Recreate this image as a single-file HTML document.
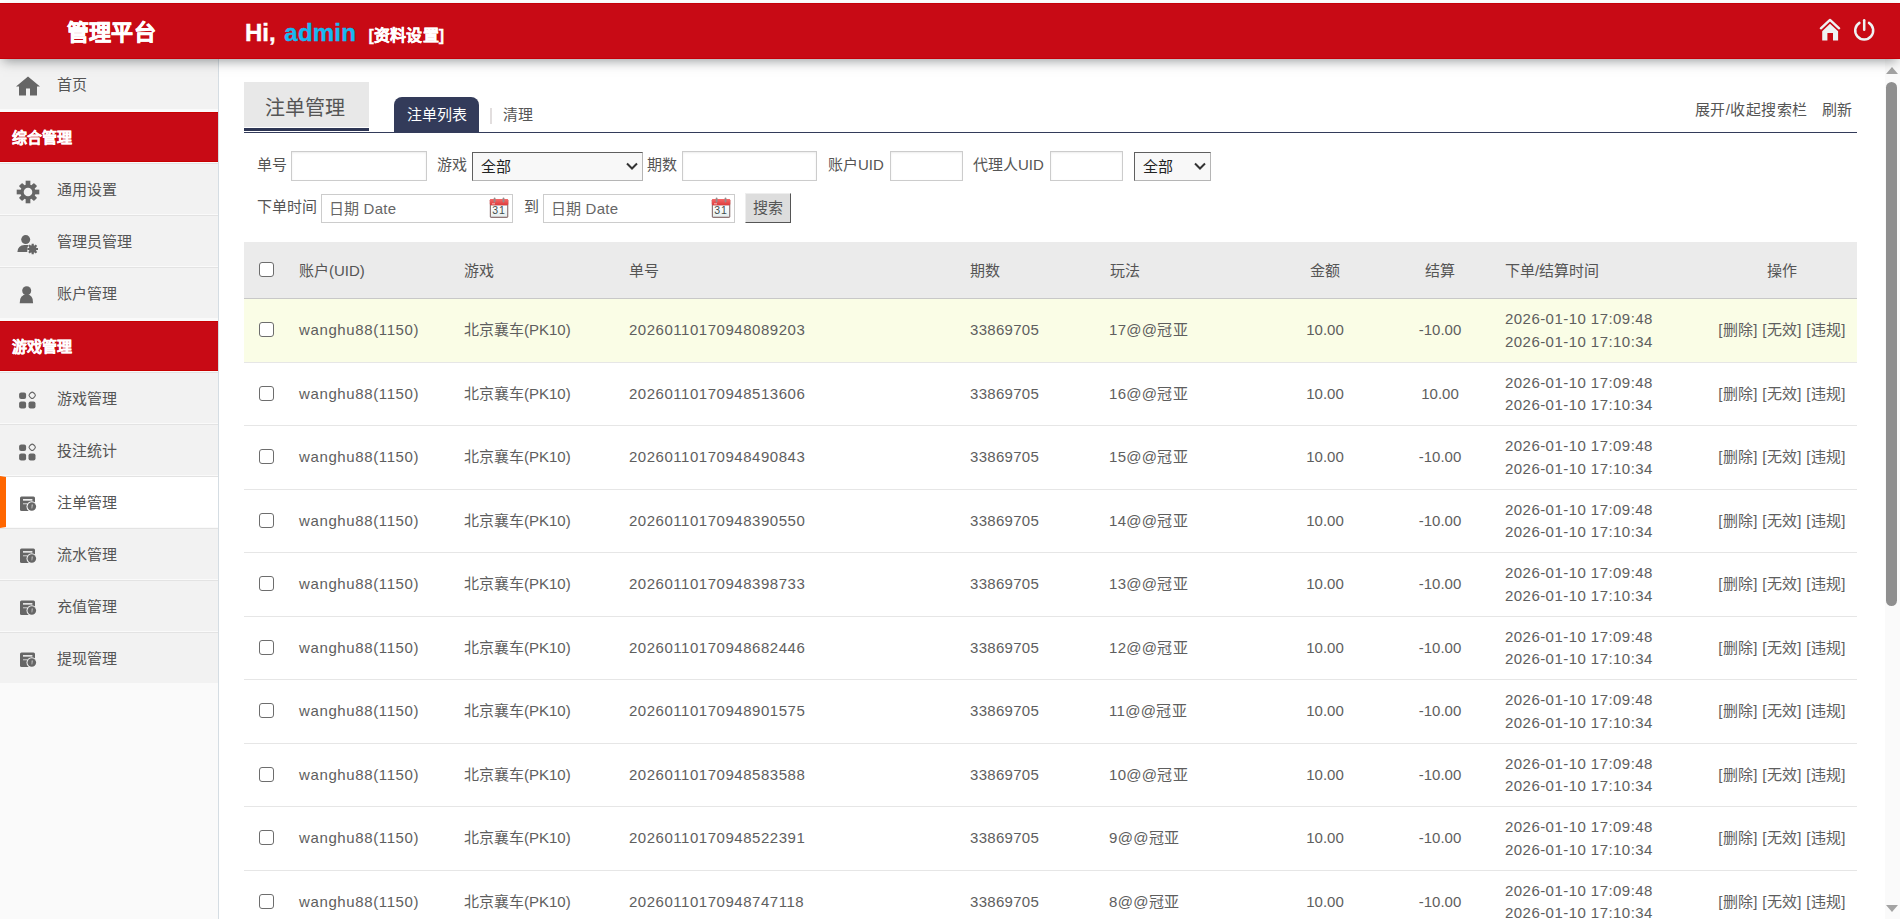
<!DOCTYPE html>
<html lang="zh-CN">
<head>
<meta charset="utf-8">
<style>
*{box-sizing:border-box;margin:0;padding:0}
html,body{width:1900px;height:919px;overflow:hidden;background:#fff;font-family:"Liberation Sans",sans-serif;color:#555}
#hdr{position:absolute;left:0;top:3px;width:1900px;height:56px;background:#c80a15;box-shadow:0 5px 11px -3px rgba(50,55,60,.5);border-top:1px solid #c40008;border-bottom:1px solid #c40008;z-index:5}
#hdr .logo{position:absolute;left:66.5px;top:13.5px;font-size:22px;font-weight:bold;color:#fff;line-height:30px;letter-spacing:0.35px;-webkit-text-stroke:0.6px #fff;white-space:nowrap}
#hdr .hi{position:absolute;left:245px;top:12.5px;font-size:24px;font-weight:bold;color:#fff;line-height:32px;white-space:nowrap;-webkit-text-stroke-width:0.4px}
#hdr .hi .adm{color:#17b8f0;margin-left:2px;letter-spacing:0.2px}
#hdr .hi .set{font-size:16px;margin-left:12.5px;letter-spacing:0.2px;-webkit-text-stroke:0.3px #fff}
#hdr svg{position:absolute}
#side{position:absolute;left:0;top:59px;width:219px;height:860px;background:#fafafa;border-right:1px solid #d5dde3}
.it{position:absolute;left:0;width:218px;height:52px;background:#f2f2f2;border-top:1px solid #e3e3e3;border-bottom:1px solid #fafafa;font-size:15px;color:#555;line-height:51.5px;padding-left:57px;white-space:nowrap}
.it svg{position:absolute}
.sec{position:absolute;left:0;width:218px;height:50px;background:#c80a15;border-top:1px solid #c80000;border-bottom:1px solid #c80000;color:#fff;font-size:15px;font-weight:bold;line-height:50px;padding-left:12px;-webkit-text-stroke:0.3px #fff}
.it.act{background:#fff;border-left:6px solid #ff6600;padding-left:51px}
.it.act svg{margin-left:-6px}
#sb{position:absolute;left:1885px;top:59px;width:15px;height:860px;background:#fafafa}
#sb .th{position:absolute;left:1px;top:23px;width:11px;height:524px;border-radius:6px;background:#8f8f8f}
#sb .up{position:absolute;left:1px;top:8px;width:0;height:0;border-left:6.5px solid transparent;border-right:6.5px solid transparent;border-bottom:7px solid #a3a3a3}
#sb .dn{position:absolute;left:1px;top:846px;width:0;height:0;border-left:6.5px solid transparent;border-right:6.5px solid transparent;border-top:7px solid #a3a3a3}
.p{position:absolute;white-space:nowrap}
.ttl{position:absolute;left:244px;top:82px;width:125px;height:45px;background:#e8e8e8;font-size:20px;color:#555;text-align:center;line-height:53px;padding-right:3px}
.ttlb{position:absolute;left:244px;top:128px;width:125px;height:3px;background:#2e3654}
.tline{position:absolute;left:244px;top:132px;width:1613px;height:1px;background:#333b5a}
.tab{position:absolute;left:394px;top:97px;width:85px;height:36px;background:#333b5a;border-radius:8px 8px 0 0;color:#fff;font-size:15px;text-align:center;line-height:36px}
.lbl{position:absolute;font-size:15px;color:#555;white-space:nowrap;line-height:20px}
.inp{position:absolute;border:1px solid #ccc;background:#fff;box-shadow:inset 0 1px 2px rgba(0,0,0,.08)}
.sel{position:absolute;border:1px solid;border-color:#5f5f5f #b5b5b5 #b5b5b5 #5f5f5f;background:#f8f8f8;font-size:15px;color:#222;line-height:27px;padding-left:8px}
.sel svg{position:absolute}
.ph{position:absolute;left:6.5px;top:4px;letter-spacing:0.3px;font-size:15px;color:#666;line-height:20px;white-space:nowrap}
.btn{position:absolute;left:745px;top:193px;width:46px;height:30px;background:#ddd;border:1px solid;border-color:#eee #555 #555 #eee;font-size:15px;color:#555;text-align:center;line-height:28px}
.thd{position:absolute;left:244px;top:242px;width:1613px;height:57px;background:#ebebeb;border-bottom:1px solid #c8c8c8}
.tr{position:absolute;left:0;width:1900px;height:63.5px}
.tr::after{content:"";position:absolute;left:244px;right:43px;bottom:0;height:1px;background:#e6e6e6}
.tr.hov::before{content:"";position:absolute;left:244px;right:43px;top:0;bottom:0;background:#fafde6}
.c{position:absolute;top:20px;font-size:15px;line-height:22px;white-space:nowrap;color:#5e5e5e}
.cc{width:100px;text-align:center}
.op{width:160px;letter-spacing:0.3px}
.t2{position:absolute;top:9px;color:#5e5e5e;font-size:15px;line-height:22.5px;white-space:nowrap;letter-spacing:0.45px}
.cb{position:absolute;left:259px;top:23px;width:15px;height:15px;border:1px solid #6d6d6d;border-radius:3px;background:#fff}
.h{position:absolute;top:19px;font-size:15px;line-height:20px;white-space:nowrap}
</style>
</head>
<body>
<div id="hdr">
  <div class="logo">管理平台</div>
  <div class="hi">Hi, <span class="adm">admin</span><span class="set">[资料设置]</span></div>
  <svg width="70" height="40" viewBox="1815 11 70 40" style="left:1815px;top:7px"><path d="M1820.9 28.3 L1830 19.9 L1839.1 28.3" fill="none" stroke="#eef2f3" stroke-width="2.4" stroke-linecap="round" stroke-linejoin="round"/><path d="M1822.2 31.2 L1830 23.8 L1838.1 31.2 L1838.1 40.5 L1833 40.5 L1833 33 L1827.4 33 L1827.4 40.5 L1822.2 40.5 Z" fill="#eef2f3"/><path d="M1859.43 22.9 A9 9 0 1 0 1868.97 22.9" fill="none" stroke="#eef2f3" stroke-width="2.5" stroke-linecap="round"/><path d="M1864.2 20.2 L1864.2 29.8" stroke="#eef2f3" stroke-width="2.5" stroke-linecap="round"/></svg>
</div>
<div id="side">
</div>
<div style="position:absolute;left:0;top:0">
<div class="it" style="top:58px"><svg width="26" height="22" viewBox="0 0 26 22" style="left:15px;top:17px"><path d="M1 10.5 L13 0.5 L25 10.5 L22 10.5 L22 19.5 L15 19.5 L15 12.5 L11 12.5 L11 19.5 L4 19.5 L4 10.5 Z" fill="#666"/></svg><span>首页</span></div>
<div class="sec" style="top:112px">综合管理</div>
<div class="it" style="top:163px"><svg width="26" height="26" viewBox="-13 -13 26 26" style="left:14.5px;top:14.5px"><g fill="#666"><rect x="-2.35" y="-11.3" width="4.7" height="5" transform="rotate(0)"/><rect x="-2.35" y="-11.3" width="4.7" height="5" transform="rotate(90)"/><rect x="-2.35" y="-11.3" width="4.7" height="5" transform="rotate(180)"/><rect x="-2.35" y="-11.3" width="4.7" height="5" transform="rotate(270)"/><rect x="-2.3" y="-10.6" width="4.6" height="5" rx="0.8" transform="rotate(45)"/><rect x="-2.3" y="-10.6" width="4.6" height="5" rx="0.8" transform="rotate(135)"/><rect x="-2.3" y="-10.6" width="4.6" height="5" rx="0.8" transform="rotate(225)"/><rect x="-2.3" y="-10.6" width="4.6" height="5" rx="0.8" transform="rotate(315)"/><circle r="7.6"/><circle r="4.3" fill="#f2f2f2"/></g></svg><span>通用设置</span></div>
<div class="it" style="top:215px"><svg width="24" height="22" viewBox="0 0 24 22" style="left:16px;top:19px"><g fill="#666"><circle cx="9.7" cy="4.6" r="4.5"/><path d="M1.4 16.9 Q1.8 10.4 8.5 10 L12.6 10 Q10.6 12.5 11.3 16.9 Z"/><g transform="translate(16.7,14)"><circle r="3.7"/><path d="M-1.1 -5.3 H1.1 V5.3 H-1.1Z M-5.3 -1.1 H5.3 V1.1 H-5.3Z" /><path d="M-1.1 -5.3 H1.1 V5.3 H-1.1Z M-5.3 -1.1 H5.3 V1.1 H-5.3Z" transform="rotate(45)"/></g></g></svg><span>管理员管理</span></div>
<div class="it" style="top:267px"><svg width="18" height="20" viewBox="0 0 18 20" style="left:18px;top:17px"><g fill="#666"><circle cx="8.7" cy="5.7" r="4.5"/><path d="M1.7 18.2 Q1.5 9.6 8.7 9.6 Q15.3 9.6 15.1 18.2 Z"/></g></svg><span>账户管理</span></div>
<div class="sec" style="top:321px">游戏管理</div>
<div class="it" style="top:372px"><svg width="22" height="22" viewBox="0 0 22 22" style="left:17px;top:17px"><g fill="#666"><rect x="2.1" y="2.4" width="7" height="6.6" rx="2"/><rect x="2.1" y="11.5" width="7" height="7" rx="2"/><rect x="11.5" y="11.5" width="7" height="7" rx="2"/><rect x="-2.75" y="-2.75" width="5.5" height="5.5" rx="1.9" transform="translate(15.2,5.3) rotate(45)" fill="none" stroke="#666" stroke-width="1.1"/></g></svg><span>游戏管理</span></div>
<div class="it" style="top:424px"><svg width="22" height="22" viewBox="0 0 22 22" style="left:17px;top:17px"><g fill="#666"><rect x="2.1" y="2.4" width="7" height="6.6" rx="2"/><rect x="2.1" y="11.5" width="7" height="7" rx="2"/><rect x="11.5" y="11.5" width="7" height="7" rx="2"/><rect x="-2.75" y="-2.75" width="5.5" height="5.5" rx="1.9" transform="translate(15.2,5.3) rotate(45)" fill="none" stroke="#666" stroke-width="1.1"/></g></svg><span>投注统计</span></div>
<div class="it act" style="top:476px"><svg width="22" height="22" viewBox="0 0 22 22" style="left:17px;top:16px"><rect x="3" y="3.6" width="15" height="14.4" rx="1.5" fill="#666"/><rect x="6" y="6" width="9.4" height="1.7" fill="#fff" opacity=".9"/><rect x="6" y="10" width="4.5" height="1.4" fill="#fff" opacity=".55"/><circle cx="14.8" cy="13.5" r="5.3" fill="#fff"/><circle cx="14.8" cy="13.5" r="4.3" fill="#666"/><path d="M14.6 11.4 L16 11.4 L15.2 15.6 L14.5 15.6Z" fill="#fff" opacity=".6"/></svg><span>注单管理</span></div>
<div class="it" style="top:528px"><svg width="22" height="22" viewBox="0 0 22 22" style="left:17px;top:16px"><rect x="3" y="3.6" width="15" height="14.4" rx="1.5" fill="#666"/><rect x="6" y="6" width="9.4" height="1.7" fill="#f2f2f2" opacity=".9"/><rect x="6" y="10" width="4.5" height="1.4" fill="#f2f2f2" opacity=".55"/><circle cx="14.8" cy="13.5" r="5.3" fill="#f2f2f2"/><circle cx="14.8" cy="13.5" r="4.3" fill="#666"/><path d="M14.6 11.4 L16 11.4 L15.2 15.6 L14.5 15.6Z" fill="#f2f2f2" opacity=".6"/></svg><span>流水管理</span></div>
<div class="it" style="top:580px"><svg width="22" height="22" viewBox="0 0 22 22" style="left:17px;top:16px"><rect x="3" y="3.6" width="15" height="14.4" rx="1.5" fill="#666"/><rect x="6" y="6" width="9.4" height="1.7" fill="#f2f2f2" opacity=".9"/><rect x="6" y="10" width="4.5" height="1.4" fill="#f2f2f2" opacity=".55"/><circle cx="14.8" cy="13.5" r="5.3" fill="#f2f2f2"/><circle cx="14.8" cy="13.5" r="4.3" fill="#666"/><path d="M14.6 11.4 L16 11.4 L15.2 15.6 L14.5 15.6Z" fill="#f2f2f2" opacity=".6"/></svg><span>充值管理</span></div>
<div class="it" style="top:632px"><svg width="22" height="22" viewBox="0 0 22 22" style="left:17px;top:16px"><rect x="3" y="3.6" width="15" height="14.4" rx="1.5" fill="#666"/><rect x="6" y="6" width="9.4" height="1.7" fill="#f2f2f2" opacity=".9"/><rect x="6" y="10" width="4.5" height="1.4" fill="#f2f2f2" opacity=".55"/><circle cx="14.8" cy="13.5" r="5.3" fill="#f2f2f2"/><circle cx="14.8" cy="13.5" r="4.3" fill="#666"/><path d="M14.6 11.4 L16 11.4 L15.2 15.6 L14.5 15.6Z" fill="#f2f2f2" opacity=".6"/></svg><span>提现管理</span></div>
</div>
<div id="sb"><div class="up"></div><div class="th"></div><div class="dn"></div></div>

<div class="ttl">注单管理</div>
<div class="ttlb"></div>
<div class="tline"></div>
<div class="tab">注单列表</div>
<div class="p" style="left:490px;top:108px;width:1.5px;height:16px;background:#e2dede"></div>
<div class="lbl" style="left:503px;top:104.5px">清理</div>
<div class="lbl" style="left:1695px;top:99.5px;letter-spacing:0.4px">展开/收起搜索栏</div>
<div class="lbl" style="left:1822px;top:99.5px">刷新</div>

<div class="lbl" style="left:257px;top:155px">单号</div>
<div class="inp" style="left:291px;top:151px;width:136px;height:30px"></div>
<div class="lbl" style="left:437px;top:155px">游戏</div>
<div class="sel" style="left:472px;top:152px;width:171px;height:29px">全部<svg width="12" height="8" viewBox="0 0 12 8" style="left:153px;top:9.3px"><path d="M1 1.5 L6 6.5 L11 1.5" fill="none" stroke="#333" stroke-width="2"/></svg></div>
<div class="lbl" style="left:647px;top:155px">期数</div>
<div class="inp" style="left:682px;top:151px;width:135px;height:30px"></div>
<div class="lbl" style="left:828px;top:155px">账户UID</div>
<div class="inp" style="left:890px;top:151px;width:73px;height:30px"></div>
<div class="lbl" style="left:973px;top:155px">代理人UID</div>
<div class="inp" style="left:1050px;top:151px;width:73px;height:30px"></div>
<div class="sel" style="left:1134px;top:152px;width:77px;height:29px">全部<svg width="12" height="8" viewBox="0 0 12 8" style="left:59px;top:9.3px"><path d="M1 1.5 L6 6.5 L11 1.5" fill="none" stroke="#333" stroke-width="2"/></svg></div>

<div class="lbl" style="left:257px;top:197px">下单时间</div>
<div class="inp" style="left:321px;top:194px;width:192px;height:29px;box-shadow:none"><span class="ph">日期 Date</span>
<svg width="21" height="23" viewBox="0 0 21 23" style="position:absolute;left:167px;top:1px"><defs><linearGradient id="cr" x1="0" y1="0" x2="0" y2="1"><stop offset="0" stop-color="#f56a6a"/><stop offset="1" stop-color="#dc3b3b"/></linearGradient><linearGradient id="cb" x1="0" y1="0" x2="0" y2="1"><stop offset="0" stop-color="#ffffff"/><stop offset="1" stop-color="#e6eeee"/></linearGradient></defs><rect x="0.8" y="2.9" width="18.5" height="19" rx="1.6" fill="#8e7676"/><rect x="2" y="9.3" width="16.1" height="11.4" fill="url(#cb)"/><rect x="0.8" y="2.9" width="18.5" height="6.4" rx="1.4" fill="url(#cr)"/><rect x="3" y="7.4" width="3" height="0.9" fill="#fff" opacity=".7"/><rect x="4.7" y="1.5" width="1.8" height="5" rx="0.9" fill="#9a8a8a"/><rect x="13.6" y="1.5" width="1.8" height="5" rx="0.9" fill="#9a8a8a"/><text x="10" y="18.2" font-size="10.5" text-anchor="middle" fill="#3f4d4b" font-family="Liberation Sans" letter-spacing="0.8">31</text></svg></div>
<div class="lbl" style="left:524px;top:197px">到</div>
<div class="inp" style="left:543px;top:194px;width:192px;height:29px;box-shadow:none"><span class="ph">日期 Date</span>
<svg width="21" height="23" viewBox="0 0 21 23" style="position:absolute;left:167px;top:1px"><defs><linearGradient id="cr2" x1="0" y1="0" x2="0" y2="1"><stop offset="0" stop-color="#f56a6a"/><stop offset="1" stop-color="#dc3b3b"/></linearGradient><linearGradient id="cb2" x1="0" y1="0" x2="0" y2="1"><stop offset="0" stop-color="#ffffff"/><stop offset="1" stop-color="#e6eeee"/></linearGradient></defs><rect x="0.8" y="2.9" width="18.5" height="19" rx="1.6" fill="#8e7676"/><rect x="2" y="9.3" width="16.1" height="11.4" fill="url(#cb2)"/><rect x="0.8" y="2.9" width="18.5" height="6.4" rx="1.4" fill="url(#cr2)"/><rect x="3" y="7.4" width="3" height="0.9" fill="#fff" opacity=".7"/><rect x="4.7" y="1.5" width="1.8" height="5" rx="0.9" fill="#9a8a8a"/><rect x="13.6" y="1.5" width="1.8" height="5" rx="0.9" fill="#9a8a8a"/><text x="10" y="18.2" font-size="10.5" text-anchor="middle" fill="#3f4d4b" font-family="Liberation Sans" letter-spacing="0.8">31</text></svg></div>
<div class="btn">搜索</div>

<div class="thd"></div>
<div style="position:absolute;left:0;top:242px;width:1900px;height:57px">
<i class="cb" style="top:20px"></i>
<span class="h" style="left:299px">账户(UID)</span>
<span class="h" style="left:464px">游戏</span>
<span class="h" style="left:629px">单号</span>
<span class="h" style="left:970px">期数</span>
<span class="h" style="left:1110px">玩法</span>
<span class="h" style="left:1275px;width:100px;text-align:center">金额</span>
<span class="h" style="left:1390px;width:100px;text-align:center">结算</span>
<span class="h" style="left:1505px">下单/结算时间</span>
<span class="h" style="left:1732px;width:100px;text-align:center">操作</span>
</div>
<div class="tr hov" style="top:299.0px"><i class="cb"></i><span class="c" style="left:299px;letter-spacing:0.62px">wanghu88(1150)</span><span class="c" style="left:464px">北京襄车(PK10)</span><span class="c" style="left:629px;letter-spacing:0.53px">20260110170948089203</span><span class="c" style="left:970px;letter-spacing:0.3px">33869705</span><span class="c" style="left:1109px;letter-spacing:0.3px">17@@冠亚</span><span class="c cc" style="left:1275px">10.00</span><span class="c cc" style="left:1390px">-10.00</span><span class="t2" style="left:1505px">2026-01-10 17:09:48<br>2026-01-10 17:10:34</span><span class="c cc op" style="left:1702px">[删除] [无效] [违规]</span></div>
<div class="tr" style="top:362.5px"><i class="cb"></i><span class="c" style="left:299px;letter-spacing:0.62px">wanghu88(1150)</span><span class="c" style="left:464px">北京襄车(PK10)</span><span class="c" style="left:629px;letter-spacing:0.53px">20260110170948513606</span><span class="c" style="left:970px;letter-spacing:0.3px">33869705</span><span class="c" style="left:1109px;letter-spacing:0.3px">16@@冠亚</span><span class="c cc" style="left:1275px">10.00</span><span class="c cc" style="left:1390px">10.00</span><span class="t2" style="left:1505px">2026-01-10 17:09:48<br>2026-01-10 17:10:34</span><span class="c cc op" style="left:1702px">[删除] [无效] [违规]</span></div>
<div class="tr" style="top:426.0px"><i class="cb"></i><span class="c" style="left:299px;letter-spacing:0.62px">wanghu88(1150)</span><span class="c" style="left:464px">北京襄车(PK10)</span><span class="c" style="left:629px;letter-spacing:0.53px">20260110170948490843</span><span class="c" style="left:970px;letter-spacing:0.3px">33869705</span><span class="c" style="left:1109px;letter-spacing:0.3px">15@@冠亚</span><span class="c cc" style="left:1275px">10.00</span><span class="c cc" style="left:1390px">-10.00</span><span class="t2" style="left:1505px">2026-01-10 17:09:48<br>2026-01-10 17:10:34</span><span class="c cc op" style="left:1702px">[删除] [无效] [违规]</span></div>
<div class="tr" style="top:489.5px"><i class="cb"></i><span class="c" style="left:299px;letter-spacing:0.62px">wanghu88(1150)</span><span class="c" style="left:464px">北京襄车(PK10)</span><span class="c" style="left:629px;letter-spacing:0.53px">20260110170948390550</span><span class="c" style="left:970px;letter-spacing:0.3px">33869705</span><span class="c" style="left:1109px;letter-spacing:0.3px">14@@冠亚</span><span class="c cc" style="left:1275px">10.00</span><span class="c cc" style="left:1390px">-10.00</span><span class="t2" style="left:1505px">2026-01-10 17:09:48<br>2026-01-10 17:10:34</span><span class="c cc op" style="left:1702px">[删除] [无效] [违规]</span></div>
<div class="tr" style="top:553.0px"><i class="cb"></i><span class="c" style="left:299px;letter-spacing:0.62px">wanghu88(1150)</span><span class="c" style="left:464px">北京襄车(PK10)</span><span class="c" style="left:629px;letter-spacing:0.53px">20260110170948398733</span><span class="c" style="left:970px;letter-spacing:0.3px">33869705</span><span class="c" style="left:1109px;letter-spacing:0.3px">13@@冠亚</span><span class="c cc" style="left:1275px">10.00</span><span class="c cc" style="left:1390px">-10.00</span><span class="t2" style="left:1505px">2026-01-10 17:09:48<br>2026-01-10 17:10:34</span><span class="c cc op" style="left:1702px">[删除] [无效] [违规]</span></div>
<div class="tr" style="top:616.5px"><i class="cb"></i><span class="c" style="left:299px;letter-spacing:0.62px">wanghu88(1150)</span><span class="c" style="left:464px">北京襄车(PK10)</span><span class="c" style="left:629px;letter-spacing:0.53px">20260110170948682446</span><span class="c" style="left:970px;letter-spacing:0.3px">33869705</span><span class="c" style="left:1109px;letter-spacing:0.3px">12@@冠亚</span><span class="c cc" style="left:1275px">10.00</span><span class="c cc" style="left:1390px">-10.00</span><span class="t2" style="left:1505px">2026-01-10 17:09:48<br>2026-01-10 17:10:34</span><span class="c cc op" style="left:1702px">[删除] [无效] [违规]</span></div>
<div class="tr" style="top:680.0px"><i class="cb"></i><span class="c" style="left:299px;letter-spacing:0.62px">wanghu88(1150)</span><span class="c" style="left:464px">北京襄车(PK10)</span><span class="c" style="left:629px;letter-spacing:0.53px">20260110170948901575</span><span class="c" style="left:970px;letter-spacing:0.3px">33869705</span><span class="c" style="left:1109px;letter-spacing:0.3px">11@@冠亚</span><span class="c cc" style="left:1275px">10.00</span><span class="c cc" style="left:1390px">-10.00</span><span class="t2" style="left:1505px">2026-01-10 17:09:48<br>2026-01-10 17:10:34</span><span class="c cc op" style="left:1702px">[删除] [无效] [违规]</span></div>
<div class="tr" style="top:743.5px"><i class="cb"></i><span class="c" style="left:299px;letter-spacing:0.62px">wanghu88(1150)</span><span class="c" style="left:464px">北京襄车(PK10)</span><span class="c" style="left:629px;letter-spacing:0.53px">20260110170948583588</span><span class="c" style="left:970px;letter-spacing:0.3px">33869705</span><span class="c" style="left:1109px;letter-spacing:0.3px">10@@冠亚</span><span class="c cc" style="left:1275px">10.00</span><span class="c cc" style="left:1390px">-10.00</span><span class="t2" style="left:1505px">2026-01-10 17:09:48<br>2026-01-10 17:10:34</span><span class="c cc op" style="left:1702px">[删除] [无效] [违规]</span></div>
<div class="tr" style="top:807.0px"><i class="cb"></i><span class="c" style="left:299px;letter-spacing:0.62px">wanghu88(1150)</span><span class="c" style="left:464px">北京襄车(PK10)</span><span class="c" style="left:629px;letter-spacing:0.53px">20260110170948522391</span><span class="c" style="left:970px;letter-spacing:0.3px">33869705</span><span class="c" style="left:1109px;letter-spacing:0.3px">9@@冠亚</span><span class="c cc" style="left:1275px">10.00</span><span class="c cc" style="left:1390px">-10.00</span><span class="t2" style="left:1505px">2026-01-10 17:09:48<br>2026-01-10 17:10:34</span><span class="c cc op" style="left:1702px">[删除] [无效] [违规]</span></div>
<div class="tr" style="top:870.5px"><i class="cb"></i><span class="c" style="left:299px;letter-spacing:0.62px">wanghu88(1150)</span><span class="c" style="left:464px">北京襄车(PK10)</span><span class="c" style="left:629px;letter-spacing:0.53px">20260110170948747118</span><span class="c" style="left:970px;letter-spacing:0.3px">33869705</span><span class="c" style="left:1109px;letter-spacing:0.3px">8@@冠亚</span><span class="c cc" style="left:1275px">10.00</span><span class="c cc" style="left:1390px">-10.00</span><span class="t2" style="left:1505px">2026-01-10 17:09:48<br>2026-01-10 17:10:34</span><span class="c cc op" style="left:1702px">[删除] [无效] [违规]</span></div>
</body>
</html>
